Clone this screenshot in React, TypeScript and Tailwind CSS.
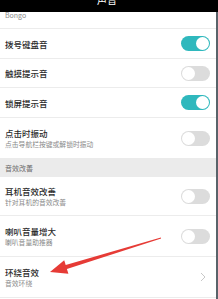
import React from "react";

type Row = {
  title: string;
  sub?: string;
  on?: boolean;
  chevron?: boolean;
  h: string;
  border?: boolean;
};

const font = { fontFamily: '"Noto Sans CJK SC", "Noto Sans", sans-serif' };

const Toggle = ({ on }: { on?: boolean }) => (
  <div
    className={`w-[29px] h-[15px] rounded-full flex items-center px-[1px] ${
      on ? "bg-[#2fb8bd] justify-end" : "bg-[#dcdcdc] justify-start"
    }`}
  >
    <div className="w-[13px] h-[13px] rounded-full bg-white" />
  </div>
);

const Chevron = () => (
  <svg width="6" height="10" viewBox="0 0 6 10" className="mr-[4px]">
    <path d="M1 1 L5 5 L1 9" fill="none" stroke="#c8c8c8" strokeWidth="1" />
  </svg>
);

const SettingRow = ({ row }: { row: Row }) => (
  <div
    className={`${row.h} flex items-center justify-between pl-[5px] pr-[6px] ${
      row.border ? "border-b border-[#ececec]" : ""
    }`}
  >
    <div className="flex flex-col gap-[2px]">
      <span className="text-[8.5px] leading-[10px] font-medium text-[#2a2a2a]">{row.title}</span>
      {row.sub && (
        <span className="text-[6.8px] leading-[8px] text-[#8a8a8a]">{row.sub}</span>
      )}
    </div>
    {row.chevron ? <Chevron /> : <Toggle on={row.on} />}
  </div>
);

const top: Row[] = [
  { title: "拨号键盘音", on: true, h: "h-[30px]", border: true },
  { title: "触摸提示音", on: false, h: "h-[29px]", border: true },
  { title: "锁屏提示音", on: true, h: "h-[30px]", border: true },
  { title: "点击时振动", sub: "点击导航栏按键或解锁时振动", on: false, h: "h-[40px]" },
];

const bottom: Row[] = [
  { title: "耳机音效改善", sub: "针对耳机的音效改善", on: false, h: "h-[39px]", border: true },
  { title: "喇叭音量增大", sub: "喇叭音量助推器", on: false, h: "h-[41px]", border: true },
  { title: "环绕音效", sub: "音效环绕", chevron: true, h: "h-[41px]", border: true },
];

export default function App() {
  return (
    <div className="relative w-[218px] h-[299px] overflow-hidden bg-white" style={font}>
      {/* status/title bar, its title cut off at the top edge */}
      <div className="h-[12px] bg-black flex justify-center overflow-hidden">
        <span className="text-[10px] leading-[10px] text-white -mt-[5px] -ml-[4px]">声音</span>
      </div>
      <div className="border-r-2 border-[#59636a] h-[287px]">
        <div className="h-[17px] pl-[5px] border-b border-[#ececec]">
          <span className="block text-[7px] leading-[7px] text-[#8a8a8a]">Bongo</span>
        </div>
        {top.map((r) => (
          <SettingRow key={r.title} row={r} />
        ))}
        <div className="h-[19px] bg-[#ebebeb] flex items-center pl-[5px]">
          <span className="text-[7px] leading-[8px] text-[#6a6a6a]">音效改善</span>
        </div>
        {bottom.map((r) => (
          <SettingRow key={r.title} row={r} />
        ))}
      </div>
      <svg
        className="absolute inset-0 pointer-events-none"
        width="218"
        height="299"
        viewBox="0 0 218 299"
      >
        <polygon
          points="50,272 64.2,260.3 65.7,265.1 160.85,237.4 161.15,238.6 66.9,268.9 68.4,273.7"
          fill="#e63b36"
        />
      </svg>
    </div>
  );
}
